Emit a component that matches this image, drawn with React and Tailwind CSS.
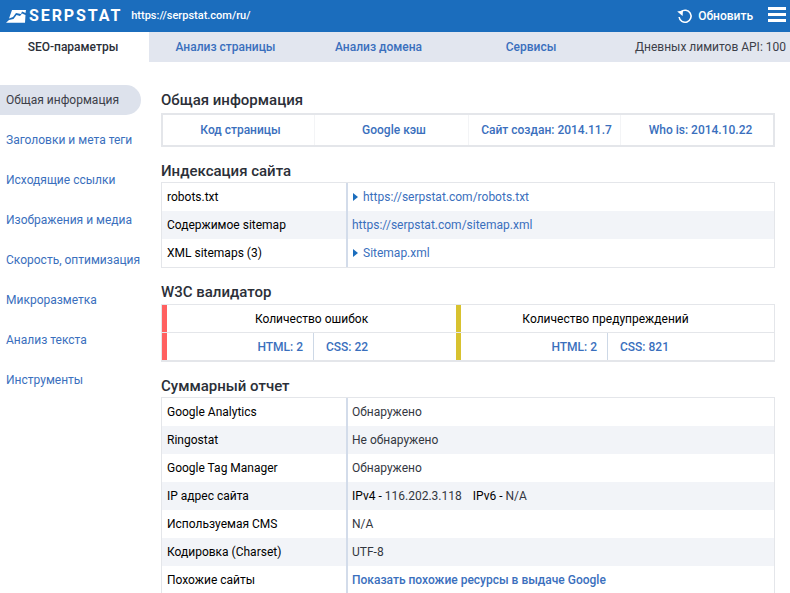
import React from "react";

const A = "text-[#3a6fbd]";

function Heading({ children, className = "" }) {
  return <h2 className={`text-[15px] leading-[18px] font-medium text-[#2b2f38] ${className}`}>{children}</h2>;
}

function Arrow() {
  return (
    <svg width="5" height="8" viewBox="0 0 5 8" className="mr-[5px] ml-px shrink-0">
      <path d="M0 0 L5 4 L0 8 Z" fill="#1b6dbd" />
    </svg>
  );
}

function Row({ label, alt, children }) {
  return (
    <div className={`flex h-[28px] items-center ${alt ? "bg-[#f2f4f8]" : "bg-white"}`}>
      <div className="flex h-full w-[186px] shrink-0 items-center border-r-2 border-[#d3dcea] pl-[5px] text-black">{label}</div>
      <div className="flex h-full flex-1 items-center pl-[4px] text-[#33373f]">{children}</div>
    </div>
  );
}

function Validator({ title, color, html, css, widthClass, titleClass = "" }) {
  return (
    <div className={`flex flex-col ${widthClass}`}>
      <div className="flex h-[27px]">
        <div className={`w-[5px] ${color}`} />
        <div className={`flex flex-1 items-center justify-center text-black ${titleClass}`}>{title}</div>
      </div>
      <div className="h-px bg-[#e4e6ea]" />
      <div className="flex h-[27px]">
        <div className={`w-[5px] ${color}`} />
        <div className={`flex flex-1 items-center font-[480] ${A}`}>
          <div className="flex h-full w-[147px] items-center justify-end border-r border-[#cdd8e6] pr-[10px]">{html}</div>
          <div className="pl-[12px]">{css}</div>
        </div>
      </div>
    </div>
  );
}

export default function App() {
  const side = ["Общая информация", "Заголовки и мета теги", "Исходящие ссылки", "Изображения и медиа", "Скорость, оптимизация", "Микроразметка", "Анализ текста", "Инструменты"];
  return (
    <div className="h-[593px] w-[790px] overflow-hidden bg-white text-[12px] font-['Roboto',sans-serif]">
      <header className="flex h-[32px] items-center bg-[#1b6dbd] text-white">
        <svg width="20" height="13" viewBox="0 0 20 13" className="ml-[6px]">
          <path d="M6 0 H20 L19.5 3 L16 1.5 L15 4 L10 3 L7 7 L3 8.5 Z" fill="#fff" />
          <path d="M0 12.8 L3 10 L7.5 9 L10.5 5 L14 6 L16 3.5 L19.5 5 L19 12.8 Z" fill="#fff" />
        </svg>
        <span className="ml-[3px] text-[16px] leading-none font-bold tracking-[1.9px]">SERPSTAT</span>
        <span className="ml-[9px] text-[11px] font-medium">https://serpstat.com/ru/</span>
        <div className="ml-auto flex items-center">
          <svg width="16" height="16" viewBox="0 0 16 16" fill="none" className="mr-[5px]">
            <path d="M4 3.8 A6 6 0 1 1 2.1 9" stroke="#fff" strokeWidth="1.6" />
            <path d="M0.2 3.4 L6 2.6 L5.6 8 Z" fill="#fff" />
          </svg>
          <span className="font-[480]">Обновить</span>
          <div className="mr-[4px] mb-[4px] ml-[15px] flex w-[18px] flex-col gap-[3px]">
            <div className="h-[3px] bg-white" />
            <div className="h-[3px] bg-white" />
            <div className="h-[3px] bg-white" />
          </div>
        </div>
      </header>

      <nav className="flex h-[30px] items-center bg-[#e2e6ef] font-[480]">
        <div className="flex h-full w-[149px] items-center justify-center bg-white pr-[3px] text-[#2b2f38]">SEO-параметры</div>
        <div className={`flex h-full w-[153px] items-center justify-center ${A}`}>Анализ страницы</div>
        <div className={`flex h-full w-[153px] items-center justify-center ${A}`}>Анализ домена</div>
        <div className={`flex h-full w-[152px] items-center justify-center ${A}`}>Сервисы</div>
        <div className="ml-auto pr-[4px] font-normal text-[#3c4049]">Дневных лимитов API: 100</div>
      </nav>

      <div className="flex">
        <aside className="mt-[23px] flex w-[141px] shrink-0 flex-col gap-[10px]">
          {side.map((s, i) => (
            <div key={s} className={`flex h-[30px] items-center pl-[6px] ${i === 0 ? "rounded-r-full bg-[#dde2ec] text-[#3c4049]" : A}`}>{s}</div>
          ))}
        </aside>

        <main className="ml-[20px] w-[614px] pt-[29px]">
          <Heading>Общая информация</Heading>
          <div className={`mt-[4px] flex h-[34px] items-center border-2 border-[#e4e6ea] font-[480] ${A}`}>
            <div className="flex h-full w-[152px] items-center justify-center border-r border-[#f3f4f6] pl-[4px]">Код страницы</div>
            <div className="flex h-full w-[154px] items-center justify-center border-r border-[#f3f4f6] pl-[5px]">Google кэш</div>
            <div className="flex h-full w-[152px] items-center justify-center border-r border-[#f3f4f6] pl-[4px]">Сайт создан: 2014.11.7</div>
            <div className="flex h-full flex-1 items-center justify-center pl-[7px]">Who is: 2014.10.22</div>
          </div>

          <Heading className="mt-[15px]">Индексация сайта</Heading>
          <div className="mt-[2px] border border-[#e4e6ea]">
            <Row label="robots.txt"><Arrow /><span className={A}>https://serpstat.com/robots.txt</span></Row>
            <Row label="Содержимое sitemap" alt><span className={A}>https://serpstat.com/sitemap.xml</span></Row>
            <Row label="XML sitemaps (3)"><Arrow /><span className={A}>Sitemap.xml</span></Row>
          </div>

          <Heading className="mt-[15px]">W3C валидатор</Heading>
          <div className="mt-[3px] flex border border-b-2 border-[#e4e6ea]">
            <Validator title="Количество ошибок" color="bg-[#ff6060]" html="HTML: 2" css="CSS: 22" widthClass="w-[294px]" />
            <Validator title="Количество предупреждений" titleClass="pr-[24px]" color="bg-[#d8c22f]" html="HTML: 2" css="CSS: 821" widthClass="flex-1" />
          </div>

          <Heading className="mt-[15px]">Суммарный отчет</Heading>
          <div className="mt-[2px] border border-[#e4e6ea]">
            <Row label="Google Analytics">Обнаружено</Row>
            <Row label="Ringostat" alt>Не обнаружено</Row>
            <Row label="Google Tag Manager">Обнаружено</Row>
            <Row label="IP адрес сайта" alt>
              <span className="text-black">IPv4 -</span>&nbsp;116.202.3.118
              <span className="ml-[11px] text-black">IPv6 -</span>&nbsp;N/A
            </Row>
            <Row label="Используемая CMS">N/A</Row>
            <Row label="Кодировка (Charset)" alt>UTF-8</Row>
            <Row label="Похожие сайты"><span className={`font-[480] ${A}`}>Показать похожие ресурсы в выдаче Google</span></Row>
          </div>
        </main>
      </div>
    </div>
  );
}
